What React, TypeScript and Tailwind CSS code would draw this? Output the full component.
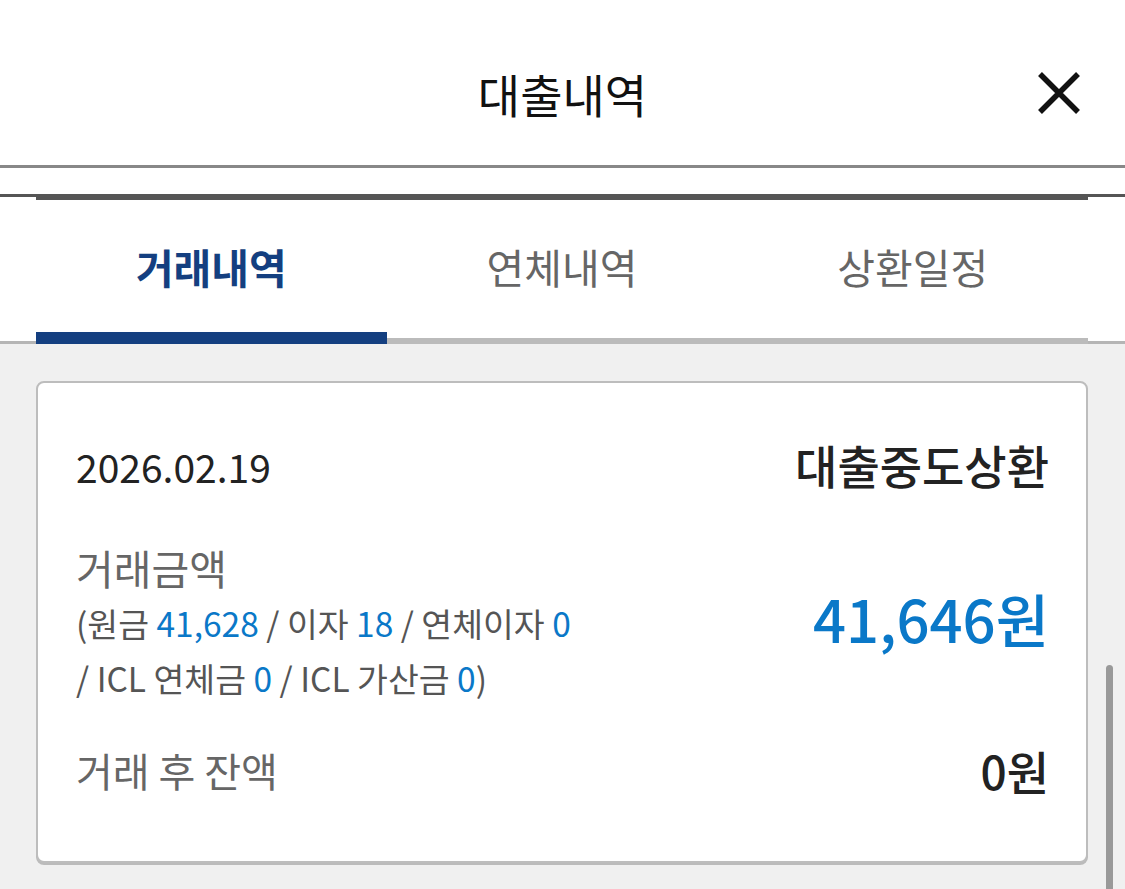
const font = { fontFamily: '"Noto Sans CJK KR", "Noto Sans", sans-serif' }

const tabs = ['거래내역', '연체내역', '상환일정']

function CloseIcon() {
  return (
    <svg width="46" height="46" viewBox="0 0 46 46" fill="none">
      <path d="M4 4L42 42M42 4L4 42" stroke="#111" strokeWidth="5.5" strokeLinecap="butt" />
    </svg>
  )
}

export default function App() {
  const active = 0

  return (
    <div className="relative h-[889px] w-full overflow-hidden bg-[#f0f0f0]" style={font}>
      {/* header */}
      <div className="bg-white">
        <div className="relative flex h-[168px] justify-center border-b-[3px] border-[#888]">
          <h1 className="mt-[70px] text-[46px] font-normal leading-none text-[#111]">대출내역</h1>
          <button className="absolute right-[43px] top-[70px]">
            <CloseIcon />
          </button>
        </div>
        <div className="h-[26px]" />

        {/* tabs */}
        <div className="flex items-end border-t-[3px] border-[#555]">
          <div className="h-[3px] w-[36px] bg-[#b5b5b5]" />
          <div className="flex flex-1 items-end border-t-[3px] border-[#555]">
            {tabs.map((t, i) => (
              <div
                key={t}
                className={
                  i === active
                    ? 'flex h-[144px] flex-1 items-center justify-center border-b-[12px] border-[#143f80] text-[41px] font-bold text-[#143f80]'
                    : 'flex h-[144px] flex-1 items-center justify-center border-b-[6px] border-[#bbbbbb] text-[41px] font-normal text-[#666]'
                }
              >
                <span className={i === active ? 'mt-[2px]' : '-mt-[4px]'}>{t}</span>
              </div>
            ))}
          </div>
          <div className="h-[3px] w-[37px] bg-[#b5b5b5]" />
        </div>
      </div>

      {/* card */}
      <div className="mx-[36px] mt-[37px] w-[1052px] rounded-[8px] border-2 border-[#bdbdbd] bg-white pb-[63px] pl-[38px] pr-[37px] pt-[57px] shadow-[0_2px_0_#bbb]">
        <div className="flex h-[52px] items-center justify-between">
          <span className="text-[39px] leading-[52px] text-[#222]">2026.02.19</span>
          <span className="-mt-[4px] text-[46px] font-medium leading-[52px] text-[#222]">대출중도상환</span>
        </div>

        <div className="mt-[48px] flex items-center justify-between">
          <div>
            <div className="text-[41px] leading-[55px] text-[#666]">거래금액</div>
            <div className="text-[33.5px] leading-[55px] text-[#555]">
              (원금 <span className="text-[#0a78c8]">41,628</span> / 이자 <span className="text-[#0a78c8]">18</span> / 연체이자{' '}
              <span className="text-[#0a78c8]">0</span>
            </div>
            <div className="text-[33.5px] leading-[55px] text-[#555]">
              / ICL 연체금 <span className="text-[#0a78c8]">0</span> / ICL 가산금 <span className="text-[#0a78c8]">0</span>)
            </div>
          </div>
          <span className="-mt-[10px] text-[58px] font-medium leading-none text-[#0a78c8]">41,646원</span>
        </div>

        <div className="mt-[38px] flex items-center justify-between">
          <span className="text-[40px] leading-[55px] text-[#666]">거래 후 잔액</span>
          <span className="text-[46px] font-medium leading-[55px] text-[#222]">0원</span>
        </div>
      </div>

      {/* scrollbar */}
      <div className="absolute right-[12px] top-[665px] h-[240px] w-[7px] rounded-full bg-[#999]" />
    </div>
  )
}
